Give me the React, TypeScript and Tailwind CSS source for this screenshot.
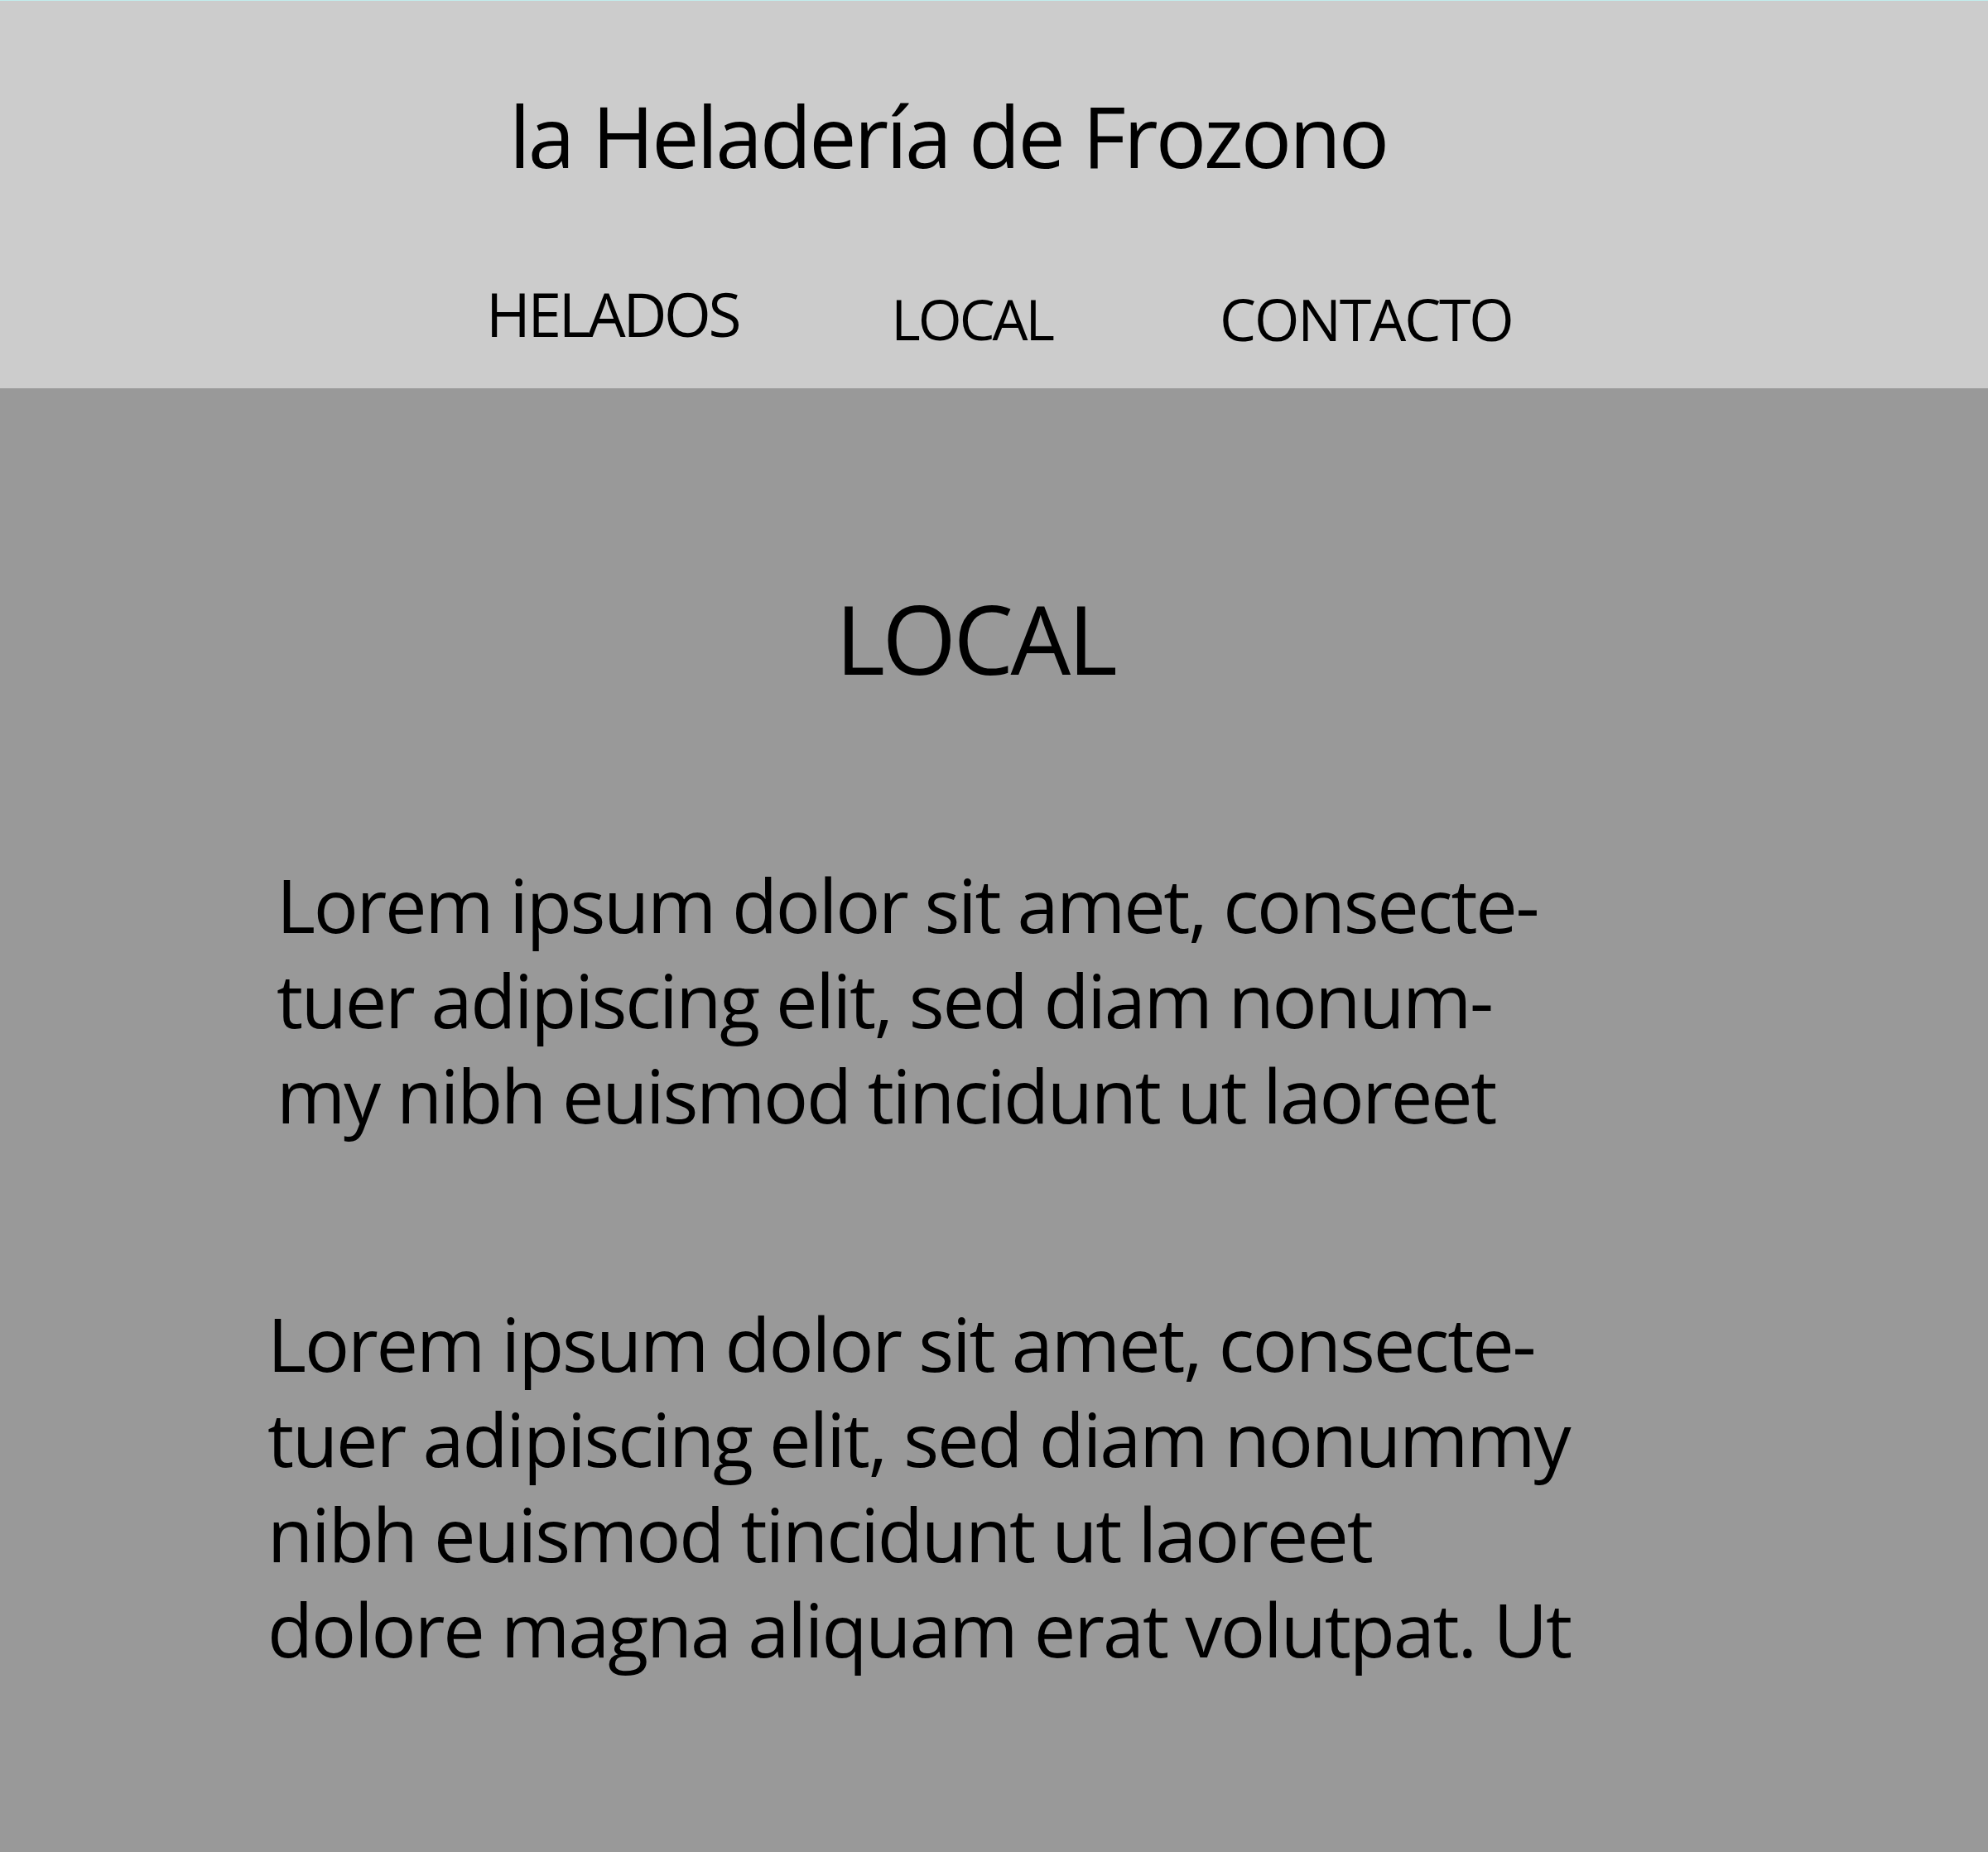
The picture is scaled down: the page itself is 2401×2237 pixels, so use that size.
import React from "react";

export default function App() {
  return (
    <div className="w-[2401px] h-[2237px] bg-[#999999] font-['Open_Sans',sans-serif] text-black overflow-hidden">
      <header className="h-[469px] bg-[#cccccc] flex flex-col">
        <div className="h-px bg-[#c2eeee]" />
        <h1 className="ml-[615px] mt-[112px] text-[102px] leading-none font-normal tracking-[-3px] whitespace-nowrap">
          la Heladería de Frozono
        </h1>
        <nav className="flex items-start mt-[127px]">
          <span className="ml-[587px] mt-[0px] text-[73px] leading-none tracking-[-3.3px]">HELADOS</span>
          <span className="ml-[184px] mt-[9px] text-[68px] leading-none tracking-[-3px]">LOCAL</span>
          <span className="ml-[202px] mt-[8px] text-[70px] leading-none tracking-[-2.2px]">CONTACTO</span>
        </nav>
      </header>
      <main className="flex flex-col">
        <h2 className="ml-[1009px] mt-[244px] text-[115px] leading-none font-normal tracking-[-3.5px]">LOCAL</h2>
        <p className="ml-[334px] mt-[207px] text-[90px] leading-[115px] tracking-[-2.3px] whitespace-nowrap">
          <span className="block">Lorem ipsum dolor sit amet, consecte-</span>
          <span className="block">tuer adipiscing elit, sed diam nonum-</span>
          <span className="block">my nibh euismod tincidunt ut laoreet</span>
        </p>
        <p className="ml-[323px] mt-[185px] text-[90px] leading-[115px] tracking-[-2.1px] whitespace-nowrap">
          <span className="block">Lorem ipsum dolor sit amet, consecte-</span>
          <span className="block">tuer adipiscing elit, sed diam nonummy</span>
          <span className="block">nibh euismod tincidunt ut laoreet</span>
          <span className="block">dolore magna aliquam erat volutpat. Ut</span>
        </p>
      </main>
    </div>
  );
}
